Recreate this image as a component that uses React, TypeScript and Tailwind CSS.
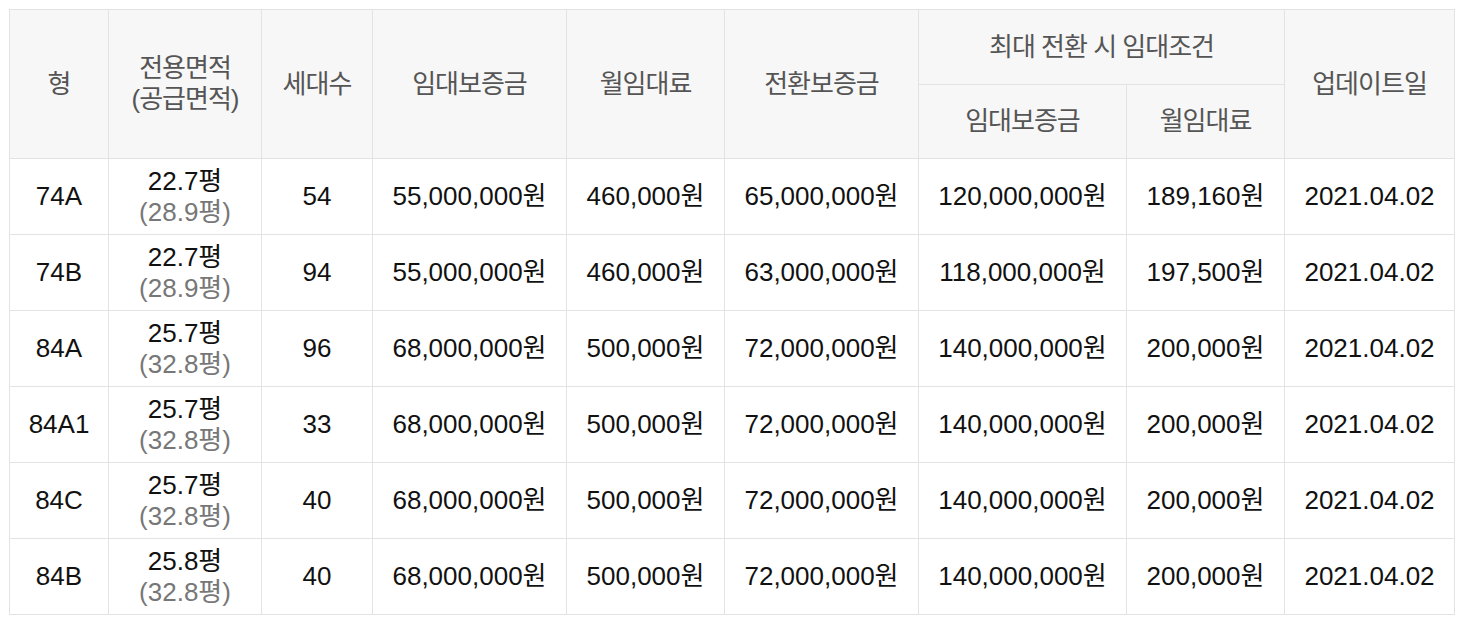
import React from 'react';

type Row = {
  type: string;
  area: string;
  supply: string;
  units: string;
  deposit: string;
  rent: string;
  convDeposit: string;
  maxDeposit: string;
  maxRent: string;
  updated: string;
};

const rows: Row[] = [
  { type: '74A', area: '22.7평', supply: '(28.9평)', units: '54', deposit: '55,000,000원', rent: '460,000원', convDeposit: '65,000,000원', maxDeposit: '120,000,000원', maxRent: '189,160원', updated: '2021.04.02' },
  { type: '74B', area: '22.7평', supply: '(28.9평)', units: '94', deposit: '55,000,000원', rent: '460,000원', convDeposit: '63,000,000원', maxDeposit: '118,000,000원', maxRent: '197,500원', updated: '2021.04.02' },
  { type: '84A', area: '25.7평', supply: '(32.8평)', units: '96', deposit: '68,000,000원', rent: '500,000원', convDeposit: '72,000,000원', maxDeposit: '140,000,000원', maxRent: '200,000원', updated: '2021.04.02' },
  { type: '84A1', area: '25.7평', supply: '(32.8평)', units: '33', deposit: '68,000,000원', rent: '500,000원', convDeposit: '72,000,000원', maxDeposit: '140,000,000원', maxRent: '200,000원', updated: '2021.04.02' },
  { type: '84C', area: '25.7평', supply: '(32.8평)', units: '40', deposit: '68,000,000원', rent: '500,000원', convDeposit: '72,000,000원', maxDeposit: '140,000,000원', maxRent: '200,000원', updated: '2021.04.02' },
  { type: '84B', area: '25.8평', supply: '(32.8평)', units: '40', deposit: '68,000,000원', rent: '500,000원', convDeposit: '72,000,000원', maxDeposit: '140,000,000원', maxRent: '200,000원', updated: '2021.04.02' },
];

const th = 'border border-[#e3e3e3] bg-[#f7f7f7] font-normal text-[#555] leading-[31px] p-0 tracking-[-1px]';
const td = 'border border-[#e3e3e3] text-[#111] text-center p-0 h-[76px] leading-[31px]';

export default function App() {
  return (
    <div className="bg-white pt-[9px] pl-[9px] min-h-[625px]" style={{ fontFamily: '"Liberation Sans", Arial, "Noto Sans CJK KR", sans-serif' }}>
      <table className="table-fixed border-collapse w-[1445px] text-[26px] border-t border-t-[#cfcfcf]">
        <colgroup>
          <col className="w-[99px]" />
          <col className="w-[153px]" />
          <col className="w-[111px]" />
          <col className="w-[194px]" />
          <col className="w-[158px]" />
          <col className="w-[194px]" />
          <col className="w-[208px]" />
          <col className="w-[158px]" />
          <col className="w-[170px]" />
        </colgroup>
        <thead>
          <tr className="h-[75px]">
            <th rowSpan={2} className={th}>형</th>
            <th rowSpan={2} className={th}>전용면적<br />(공급면적)</th>
            <th rowSpan={2} className={th}>세대수</th>
            <th rowSpan={2} className={th}>임대보증금</th>
            <th rowSpan={2} className={th}>월임대료</th>
            <th rowSpan={2} className={th}>전환보증금</th>
            <th colSpan={2} className={th}>최대 전환 시 임대조건</th>
            <th rowSpan={2} className={th}>업데이트일</th>
          </tr>
          <tr className="h-[74px]">
            <th className={th}>임대보증금</th>
            <th className={th}>월임대료</th>
          </tr>
        </thead>
        <tbody>
          {rows.map((r) => (
            <tr key={r.type}>
              <td className={td}>{r.type}</td>
              <td className={td}>
                <div>{r.area}</div>
                <div className="text-[#777]">{r.supply}</div>
              </td>
              <td className={td}>{r.units}</td>
              <td className={td}>{r.deposit}</td>
              <td className={td}>{r.rent}</td>
              <td className={td}>{r.convDeposit}</td>
              <td className={td}>{r.maxDeposit}</td>
              <td className={td}>{r.maxRent}</td>
              <td className={td}>{r.updated}</td>
            </tr>
          ))}
        </tbody>
      </table>
    </div>
  );
}
